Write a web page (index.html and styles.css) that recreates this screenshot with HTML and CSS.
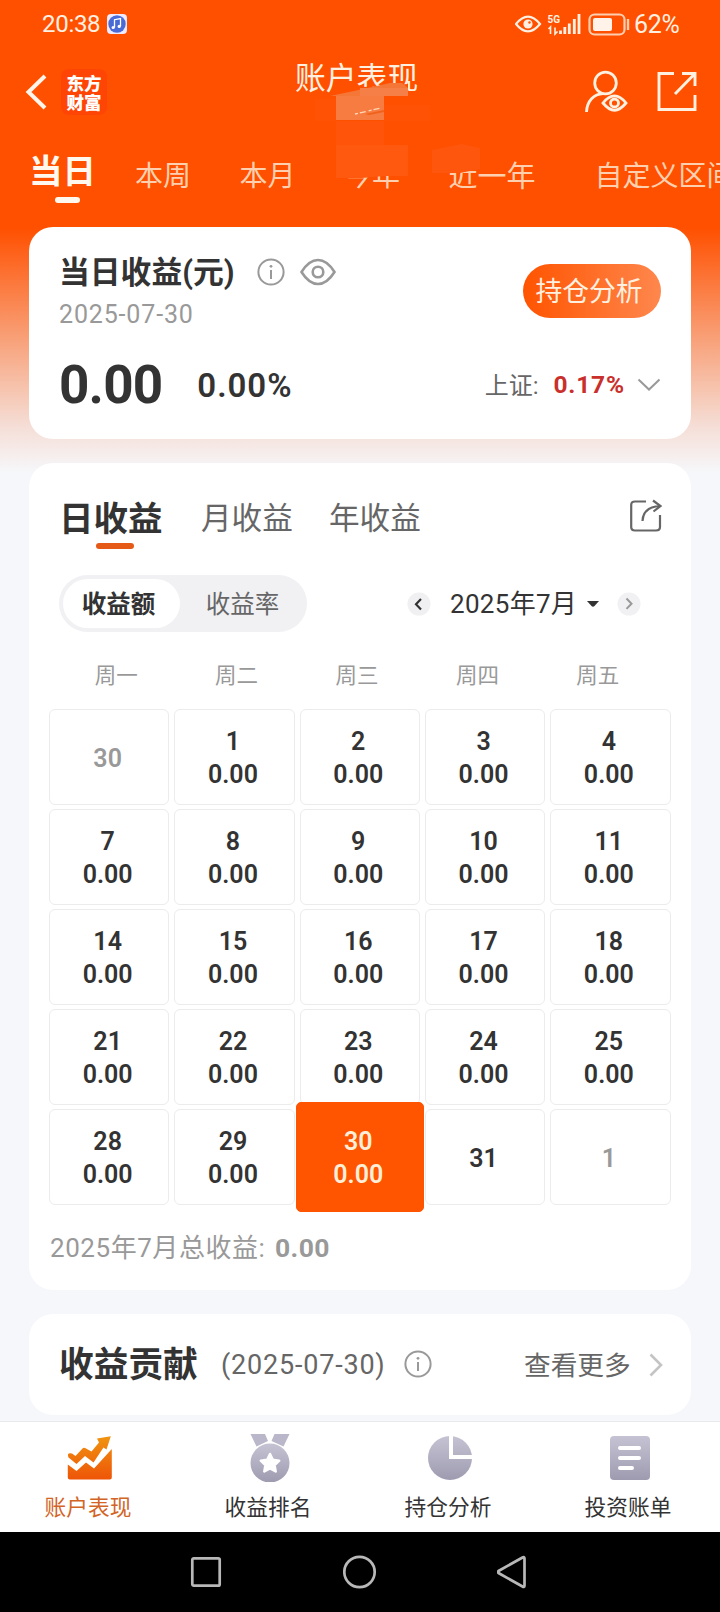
FILE: index.html
```html
<!DOCTYPE html>
<html lang="zh-CN">
<head>
<meta charset="utf-8">
<title>账户表现</title>
<link rel="stylesheet" href="styles.css">
</head>
<body>
<div class="screen">
  <header class="hero">
    <div class="status">
      <span class="clock">20:38</span>
      <svg class="music" width="20" height="20" viewBox="0 0 20 20"><rect width="20" height="20" rx="4" fill="#efeafd"/><circle cx="10" cy="10" r="8.7" fill="#4a6bd6"/><path d="M7.500 13.500V5.700l6-1.200v7.700" fill="none" stroke="#fff" stroke-width="1.300"/><circle cx="6.200" cy="13.500" r="1.600" fill="#fff"/><circle cx="12.200" cy="12.400" r="1.600" fill="#fff"/></svg>
      <svg class="status-icons" width="116" height="24" viewBox="0 0 116 24">
        <g fill="none" stroke="#fff0e2" stroke-width="2.200"><path d="M1 12Q7 4.600 13 4.600T25 12Q19 19.400 13 19.400T1 12Z"/><circle cx="13" cy="12" r="4.600" fill="#fff0e2" stroke="none"/><circle cx="14.500" cy="10.500" r="1.200" fill="#ff5000" stroke="none"/></g>
        <text class="net" x="32.500" y="10.500">5G</text>
        <path d="M33.500 17l2-2v7M40 15.500v6.500l2.500-2.500" fill="none" stroke="#fff0e2" stroke-width="1.600"/>
        <path d="M45.500 22v-3.500M49.800 22v-7M54.300 22V11.500M59.300 22V7M64 22V2" stroke="#fff0e2" stroke-width="2.800"/>
        <rect x="74.500" y="2.500" width="35" height="20" rx="5" fill="none" stroke="#ffcdb0" stroke-width="2.200"/><rect x="78" y="6" width="19" height="13" rx="2" fill="#fff3e9"/><path d="M113 7v11" stroke="#ffcdb0" stroke-width="2.400"/>
      </svg>
      <span class="percent">62%</span>
    </div>
    <div class="bar">
      <svg class="back" width="22" height="36" viewBox="0 0 22 36"><path d="M20 2L3.500 18 20 34" fill="none" stroke="#fff5ea" stroke-width="4"/></svg>
      <div class="brand"><span>东方</span><span>财富</span></div>
      <h1 class="title">账户表现</h1>
      <svg class="user" width="44" height="44" viewBox="0 0 44 44"><g fill="none" stroke="#fff0e0" stroke-width="2.800"><circle cx="21.500" cy="13" r="10.800"/><path d="M2.500 42C3 31 10 24 19 23.600"/><path d="M19 33Q24.500 25.800 30.500 25.800T42 33Q36 40.300 30.500 40.300T19 33Z"/><circle cx="30.500" cy="33" r="4"/></g></svg>
      <svg class="open" width="40" height="40" viewBox="0 0 40 40"><path d="M17 1.500H2v36h36V23M25 1.500h13V14M38 1.500L18 22" fill="none" stroke="#fff0e0" stroke-width="2.900"/></svg>
    </div>
    <nav class="periods">
      <span class="period active">当日</span><span class="period">本周</span><span class="period">本月</span><span class="period">今年</span><span class="period">近一年</span><span class="period custom">自定义区间</span>
    </nav>
    <svg class="smear" width="180" height="110" viewBox="0 0 180 110">
      <path d="M13 13L49 4 93 1v18H61V37H21V19z" fill="#ff5000"/>
      <path d="M15 13L39 8 75 0h12l6 5v8z" fill="#f47738"/>
      <path d="M21 13H69V37H21z" fill="#f77c41"/><path d="M45 5H93V13H45z" fill="#f57f47"/>
      <path d="M40 31l26-6" stroke="#ffd8b8" stroke-width="1.300" stroke-dasharray="3 2 6 3"/>
      <path d="M50 31l19-4v2l-15 3z" fill="#f0621c"/>
      <path d="M0 16h21v22H0zM69 22h46v16H69z" fill="#ff5205"/>
      <path d="M21 38H69v24H21z" fill="#ff540a"/><path d="M21 62H93v31H69l-22 2H21z" fill="#ff5910"/>
      <path d="M117 67l30-6 18 4v21l-20 4h-28z" fill="#ff560d"/>
    </svg>
  </header>
  <main class="content">
    <section class="card summary">
      <div class="summary-top">
        <div>
          <div class="heading"><h2>当日收益(元)</h2>
            <svg class="info" width="28" height="28" viewBox="0 0 28 28"><circle cx="14" cy="14" r="12.600"/><path d="M14 12v9"/><circle class="dot" cx="14" cy="8.300" r="1.400"/></svg>
            <svg class="eye" width="36" height="28" viewBox="0 0 36 28"><path d="M1.500 14Q9 2 18 2T34.500 14Q27 26 18 26T1.500 14Z"/><circle cx="18" cy="14" r="5.300"/></svg>
          </div>
          <div class="date">2025-07-30</div>
        </div>
        <button class="analyse">持仓分析</button>
      </div>
      <div class="figures"><span class="amount">0.00</span><span class="rate">0.00%</span><span class="index">上证:</span><span class="index-rate">0.17%</span><svg class="chev" width="24" height="14" viewBox="0 0 24 14"><path d="M1.500 1.500L12 11.500 22.500 1.500" fill="none" stroke="#999" stroke-width="2"/></svg></div>
    </section>
    <section class="card calendar">
      <div class="views"><span class="view active">日收益</span><span class="view month">月收益</span><span class="view year">年收益</span>
        <svg class="share" width="34" height="34" viewBox="0 0 34 34"><path d="M17 2.500H6Q2.200 2.500 2.200 6v22q0 3.500 3.800 3.500h21q4 0 4-3.500V16M13.500 22Q14 8 31 7M24 1.500L31.500 7 24.500 12.500" fill="none" stroke="#666" stroke-width="2.200"/></svg>
      </div>
      <div class="controls">
        <div class="segment"><span class="option chosen">收益额</span><span class="option">收益率</span></div>
        <div class="stepper">
          <svg width="24" height="24" viewBox="0 0 24 24"><circle cx="12" cy="12" r="11.500" fill="#f0f0f3"/><path d="M14 7l-5 5.200 5 5.200" fill="none" stroke="#333" stroke-width="2.200"/></svg>
          <span class="month-name">2025年7月</span>
          <svg class="caret" width="14" height="8" viewBox="0 0 14 8"><path d="M1 1h12L8.500 6Q7 7.500 5.500 6z" fill="#333"/></svg>
          <svg width="24" height="24" viewBox="0 0 24 24"><circle cx="12" cy="12" r="11.500" fill="#f1f1f3"/><path d="M9.500 6.500l5 5.200-5 5.200" fill="none" stroke="#999" stroke-width="2"/></svg>
        </div>
      </div>
      <div class="weekdays"><span>周一</span><span>周二</span><span>周三</span><span>周四</span><span>周五</span></div>
      <div class="days">
        <div class="day other"><b>30</b></div><div class="day"><b>1</b><b>0.00</b></div><div class="day"><b>2</b><b>0.00</b></div><div class="day"><b>3</b><b>0.00</b></div><div class="day"><b>4</b><b>0.00</b></div>
        <div class="day"><b>7</b><b>0.00</b></div><div class="day"><b>8</b><b>0.00</b></div><div class="day"><b>9</b><b>0.00</b></div><div class="day"><b>10</b><b>0.00</b></div><div class="day"><b>11</b><b>0.00</b></div>
        <div class="day"><b>14</b><b>0.00</b></div><div class="day"><b>15</b><b>0.00</b></div><div class="day"><b>16</b><b>0.00</b></div><div class="day"><b>17</b><b>0.00</b></div><div class="day"><b>18</b><b>0.00</b></div>
        <div class="day"><b>21</b><b>0.00</b></div><div class="day"><b>22</b><b>0.00</b></div><div class="day"><b>23</b><b>0.00</b></div><div class="day"><b>24</b><b>0.00</b></div><div class="day"><b>25</b><b>0.00</b></div>
        <div class="day"><b>28</b><b>0.00</b></div><div class="day"><b>29</b><b>0.00</b></div><div class="day today"><b>30</b><b>0.00</b></div><div class="day"><b>31</b></div><div class="day other"><b>1</b></div>
      </div>
      <div class="total"><span class="total-label">2025年7月总收益:</span><b>0.00</b></div>
    </section>
    <section class="card contribution">
      <h2>收益贡献</h2><span class="contribution-date">(2025-07-30)</span>
      <svg class="info" width="28" height="28" viewBox="0 0 28 28"><circle cx="14" cy="14" r="12.600"/><path d="M14 12v9"/><circle class="dot" cx="14" cy="8.300" r="1.400"/></svg>
      <span class="more">查看更多</span>
      <svg class="next" width="14" height="24" viewBox="0 0 14 24"><path d="M1.500 1.500L12 12 1.500 22.500" fill="none" stroke="#c4c4c4" stroke-width="2.600"/></svg>
    </section>
  </main>
  <footer class="tabs">
    <svg width="0" height="0" class="defs"><defs>
      <linearGradient id="grey" x1="0" y1="0" x2="0" y2="1"><stop offset="0" stop-color="#c5c3d3"/><stop offset="1" stop-color="#9e9bb0"/></linearGradient>
      <linearGradient id="orange" gradientUnits="userSpaceOnUse" x1="0" y1="4" x2="0" y2="48"><stop offset="0" stop-color="#f09410"/><stop offset="1" stop-color="#ee5408"/></linearGradient>
    </defs></svg>
    <div class="tab current"><svg width="48" height="50" viewBox="0 0 48 50"><g fill="url(#orange)"><path d="M1.800 32.500L10.500 39l9.500-8.500 8 6L45.800 17V45.500q0 2-2 2h-40q-2 0-2-2z"/><path d="M31 6.500L44.800 4.200 40.500 17.500 37.500 15.500 27.500 30.500 19 24 10.500 32 2.500 25.500Q.5 20 6 21.500L9.500 24 16.500 16.500Q18 15 20 16.500L25.500 19.500 33 10.500z"/></g></svg><span>账户表现</span></div>
    <div class="tab"><svg width="48" height="50" viewBox="0 0 48 50"><path d="M4.500 2h14.500l3 7-11.500 5.500zM28.500 2H43.500l-6 12.500L25.500 9z" fill="#b9b7c9"/><circle cx="24" cy="31" r="19.500" fill="url(#grey)"/><path d="M24 22l2.800 5.800 6.400.9-4.600 4.500 1.100 6.300L24 36.500l-5.700 3 1.100-6.300-4.600-4.500 6.400-.9z" fill="#fff" stroke="#fff" stroke-width="2.500" stroke-linejoin="round"/></svg><span>收益排名</span></div>
    <div class="tab"><svg width="48" height="50" viewBox="0 0 48 50"><circle cx="24" cy="26" r="22" fill="url(#grey)"/><path d="M25 2v23h24" fill="none" stroke="#fff" stroke-width="4"/></svg><span>持仓分析</span></div>
    <div class="tab"><svg width="48" height="50" viewBox="0 0 48 50"><rect x="4" y="4" width="40" height="44" rx="4" fill="url(#grey)"/><path d="M14 16h19M14 26h19M14 36h12" stroke="#fff" stroke-width="4" stroke-linecap="round"/></svg><span>投资账单</span></div>
  </footer>
  <div class="system">
    <svg width="34" height="34" viewBox="0 0 34 34"><rect x="3.300" y="3.300" width="27.400" height="27.400" rx="1.500"/></svg>
    <svg width="34" height="34" viewBox="0 0 34 34"><circle cx="16.500" cy="17" r="15.200"/></svg>
    <svg width="34" height="34" viewBox="0 0 34 34"><path d="M25.500 2.500Q27.500 1.200 27.500 3.500v27q0 2.300-2 1L1.500 18q-1.500-1 0-2z"/></svg>
  </div>
</div>
</body>
</html>
```
FILE: styles.css
```css
* { box-sizing: border-box; }
body { margin: 0; font-family: Roboto, "Noto Sans CJK SC", sans-serif; color: #333; }
h1, h2 { margin: 0; }
svg { display: block; flex: none; }
span, h1, h2, b { white-space: nowrap; }
.screen { width: 720px; height: 1612px; overflow: hidden; display: flex; flex-direction: column; background: linear-gradient(#ff5000 0 228px, #f8a57f 345px, #f5ddd5 425px, #f6f7fa 472px); }
.hero { position: relative; height: 227px; flex: none; }

.status { display: flex; align-items: center; height: 48px; padding-left: 42px; color: #fff0e2; }
.clock { width: 59px; font-size: 24px; line-height: 28px; letter-spacing: -.3px; }
.music { margin-left: 6px; }
.status-icons { margin-left: 388px; }
.net { font: 700 10px Roboto, sans-serif; fill: #fff0e2; }
.percent { margin: 2px 0 0 3px; font-size: 25px; line-height: 28px; letter-spacing: -.3px; }

.bar { display: flex; align-items: center; height: 88px; padding-left: 25px; }
.brand { display: flex; flex-direction: column; align-items: center; justify-content: center; width: 46px; height: 46px; margin-left: 14px; border-radius: 8px; background: #ff4505; color: #fff; font: 900 17.5px/19px "Noto Sans CJK SC", sans-serif; }
.title { width: 124px; margin: -27px 0 0 188px; color: #fff0e0; font-size: 30.800px; line-height: 40px; font-weight: 400; }
.user { margin-left: 165px; }
.open { margin-left: 29px; }

.periods { display: flex; height: 80px; padding: 16px 0 0 29px; color: #ffd0b0; }
.period { flex: none; width: 104.500px; font-size: 28px; line-height: 50px; }
.period.active { position: relative; width: 106px; color: #fff8ee; font-size: 33.500px; font-weight: 700; line-height: 39px; }
.period.active::after { content: ""; position: absolute; left: 26px; top: 45px; width: 25px; height: 6px; border-radius: 3px; background: #fff8ee; }
.period:nth-child(5) { width: 146px; font-size: 29px; }
.smear { position: absolute; left: 315px; top: 83px; }

.content { flex: 1; padding: 0 29px; display: flex; flex-direction: column; gap: 24px; }
.card { flex: none; background: #fff; border-radius: 24px; }
.summary { height: 212px; padding: 24px 30px 0 30px; }
.summary-top { display: flex; justify-content: space-between; }
.heading { display: flex; align-items: center; height: 42px; }
.heading h2 { width: 185px; padding-top: 2px; font-size: 30.800px; line-height: 42px; }
.info { margin-left: 13px; fill: none; stroke: #999; stroke-width: 2; }
.info .dot { fill: #999; stroke: none; }
.eye { margin-left: 15px; fill: none; stroke: #999; stroke-width: 2.600; }
.date { margin-top: 7px; color: #999; font-size: 25px; line-height: 30px; letter-spacing: .85px; }
.analyse { width: 138px; height: 54px; margin-top: 13px; padding: 0 6px 2px 0; border: 0; border-radius: 27px; background: linear-gradient(90deg, #ff5400, #ff874d); color: #fff0e0; font: 26.800px/52px "Noto Sans CJK SC", sans-serif; }
.figures { display: flex; align-items: center; height: 64px; margin-top: 21px; }
.amount { width: 139px; padding-top: 4px; font-size: 53px; line-height: 64px; font-weight: 700; letter-spacing: -.8px; }
.rate { width: 289px; padding-top: 4px; font-size: 33px; font-weight: 600; letter-spacing: 1px; }
.index { width: 69px; color: #666; font-size: 24px; }
.index-rate { width: 84px; padding-top: 3px; color: #c9302c; font-size: 24.500px; font-weight: 700; letter-spacing: .8px; }
.chev { margin-top: 3px; }

.calendar { height: 827px; padding-top: 24px; }
.views { display: flex; align-items: center; height: 62px; padding-left: 30px; color: #666; font-size: 30.600px; }
.view.active { position: relative; width: 142px; padding-top: 2px; color: #333; font-size: 34.500px; font-weight: 700; line-height: 60px; }
.view.active::after { content: ""; position: absolute; left: 37px; top: 56px; width: 38px; height: 6px; border-radius: 3px; background: #e65a18; }
.month, .year { padding-bottom: 5px; }
.month { width: 128px; }
.year { width: 93px; }
.share { margin: -4px 0 0 207px; }
.controls { display: flex; align-items: center; margin-top: 26px; padding-left: 30px; }
.segment { display: flex; width: 248px; height: 57px; padding: 5px 4px 4px; border-radius: 29px; background: #f1f1f4; font-size: 24.500px; line-height: 50px; }
.option { width: 123px; text-align: center; color: #666; }
.chosen { width: 117px; height: 49px; margin-top: -1px; border-radius: 25px; background: #fff; color: #333; font-weight: 700; line-height: 51px; padding-right: 6px; }
.option:last-child { padding-left: 2px; }
.stepper { display: flex; align-items: center; margin-left: 100px; }
.month-name { width: 127px; margin-left: 19px; font-size: 26px; line-height: 38px; letter-spacing: .3px; }
.caret { margin: 1px 30px 0 9px; }
.stepper svg:last-child { margin-left: -13px; }
.weekdays { display: grid; grid-template-columns: repeat(5, 1fr); margin: 26px 33px 0 27px; color: #999; font-size: 21.500px; line-height: 36px; text-align: center; }
.days { display: grid; grid-template-columns: repeat(5, 1fr); grid-auto-rows: 96px; gap: 4px 5px; margin: 15px 20.500px 0 20px; }
.day { display: flex; flex-direction: column; align-items: center; justify-content: center; padding: 2px 3px 0 0; border: 1px solid #ececec; border-radius: 6px; font-size: 25px; line-height: 33px; }
.day b { font-weight: 600; }
.other { color: #999; }
.today { margin: -7px -4px; border-color: #ff5400; border-radius: 5px; background: #ff5400; color: #ffefd9; z-index: 1; }
.total { display: flex; align-items: center; height: 40px; margin: 21px 0 0 21px; color: #999; font-size: 26px; }
.total-label { width: 225px; padding-bottom: 2px; letter-spacing: .55px; }
.total b { padding-top: 2px; font-size: 26.500px; letter-spacing: .4px; }

.contribution { display: flex; align-items: center; height: 101px; padding-left: 30px; }
.contribution h2 { width: 162px; padding-top: 1px; font-size: 34.700px; line-height: 50px; }
.contribution-date { width: 163px; color: #666; font-size: 27px; letter-spacing: .8px; padding-top: 1px; }
.contribution .info { margin-left: 20px; margin-top: -1px; }
.more { width: 108px; margin-left: 92px; padding-bottom: 2px; color: #666; font-size: 26.700px; }
.next { margin-left: 17px; }

.tabs { display: flex; flex: none; height: 111px; padding-top: 10px; border-top: 1px solid #e9eaee; background: #fff; }
.defs { position: absolute; }
.tab { display: flex; flex-direction: column; align-items: center; width: 180px; font-size: 21.700px; line-height: 30px; }
.tab span { margin: 11px 4px 0 0; }
.current { color: #d26426; }
.system { display: flex; align-items: center; justify-content: center; gap: 120px; flex: none; height: 80px; background: #000; }
.system svg { fill: none; stroke: #b8b8b8; stroke-width: 2.700; }
```
